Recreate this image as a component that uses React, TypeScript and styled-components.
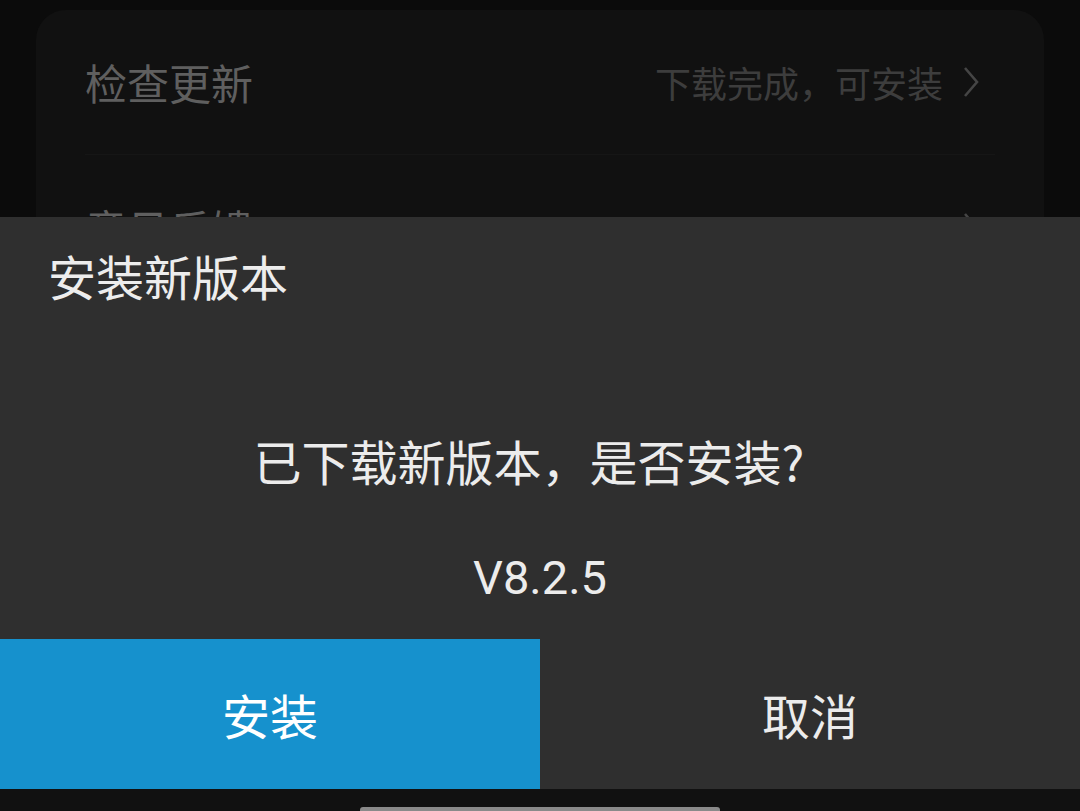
import React from 'react'
import styled, { createGlobalStyle } from 'styled-components'

const GlobalStyle = createGlobalStyle`
	* {
		box-sizing: border-box;
	}
	html,
	body {
		margin: 0;
		padding: 0;
		background: #0b0b0b;
		font-family: 'Noto Sans CJK SC', 'Noto Sans', sans-serif;
	}
`

const Screen = styled.div`
	position: relative;
	height: 811px;
	display: flex;
	flex-direction: column;
	overflow: hidden;
`
const Content = styled.div`
	flex: 1;
	padding: 10px 36px 0 36px;
	overflow: hidden;
`
const Card = styled.div`
	background: #111111;
	border-radius: 30px;
	padding: 0 49px;
`
const Row = styled.div<{ $divider?: boolean }>`
	height: 145px;
	display: flex;
	align-items: center;
	justify-content: space-between;
	border-bottom: ${(p) => (p.$divider ? '1px solid #161616' : 'none')};
`
const RowLabel = styled.div`
	color: #5f5f5f;
	font-size: 42px;
	line-height: 1;
`
const RowValue = styled.div`
	display: flex;
	align-items: center;
	color: #3d3d3d;
	font-size: 36px;
	line-height: 1;
	> svg {
		margin-left: 20px;
		margin-right: 16px;
	}
`
const NavBar = styled.div`
	height: 22px;
	background: #111111;
	display: flex;
	justify-content: center;
	align-items: flex-end;
`
const HomeIndicator = styled.div`
	width: 360px;
	height: 4px;
	background: #8a8a8a;
	border-radius: 3px 3px 0 0;
`

// bottom sheet over the settings list
const Sheet = styled.div`
	position: absolute;
	left: 0;
	right: 0;
	bottom: 22px;
	height: 572px;
	background: #2f2f2f;
	display: flex;
	flex-direction: column;
`
const Title = styled.div`
	color: #ededed;
	font-size: 48px;
	line-height: 64px;
	padding: 26px 0 0 48px;
`
const Message = styled.div`
	color: #ececec;
	font-size: 48px;
	line-height: 64px;
	text-align: center;
	margin-top: 121px;
	padding-right: 22px;
`
const Version = styled.div`
	color: #ececec;
	font-family: Roboto, 'Noto Sans', sans-serif;
	font-size: 47px;
	line-height: 64px;
	text-align: center;
	margin-top: 54px;
`
const Actions = styled.div`
	margin-top: auto;
	height: 150px;
	display: flex;
`
const ActionButton = styled.button<{ $primary?: boolean }>`
	flex: 1;
	border: none;
	padding: 0;
	background: ${(p) => (p.$primary ? '#1691cd' : '#2f2f2f')};
	color: ${(p) => (p.$primary ? '#ffffff' : '#ececec')};
	font-family: 'Noto Sans CJK SC', sans-serif;
	font-size: 48px;
	cursor: pointer;
`

const Chevron = () => (
	<svg width='16' height='30' viewBox='0 0 16 30'>
		<path d='M2 1 L14 15 L2 29' fill='none' stroke='#454545' strokeWidth='2.6' />
	</svg>
)

const App = () => {
	return (
		<>
			<GlobalStyle />
			<Screen>
				<Content>
					<Card>
						<Row $divider>
							<RowLabel>检查更新</RowLabel>
							<RowValue>
								下载完成，可安装
								<Chevron />
							</RowValue>
						</Row>
						<Row>
							<RowLabel>意见反馈</RowLabel>
							<RowValue>
								<Chevron />
							</RowValue>
						</Row>
					</Card>
				</Content>
				<NavBar>
					<HomeIndicator />
				</NavBar>
				<Sheet>
					<Title>安装新版本</Title>
					<Message>已下载新版本，是否安装?</Message>
					<Version>V8.2.5</Version>
					<Actions>
						<ActionButton $primary>安装</ActionButton>
						<ActionButton>取消</ActionButton>
					</Actions>
				</Sheet>
			</Screen>
		</>
	)
}

export default App
